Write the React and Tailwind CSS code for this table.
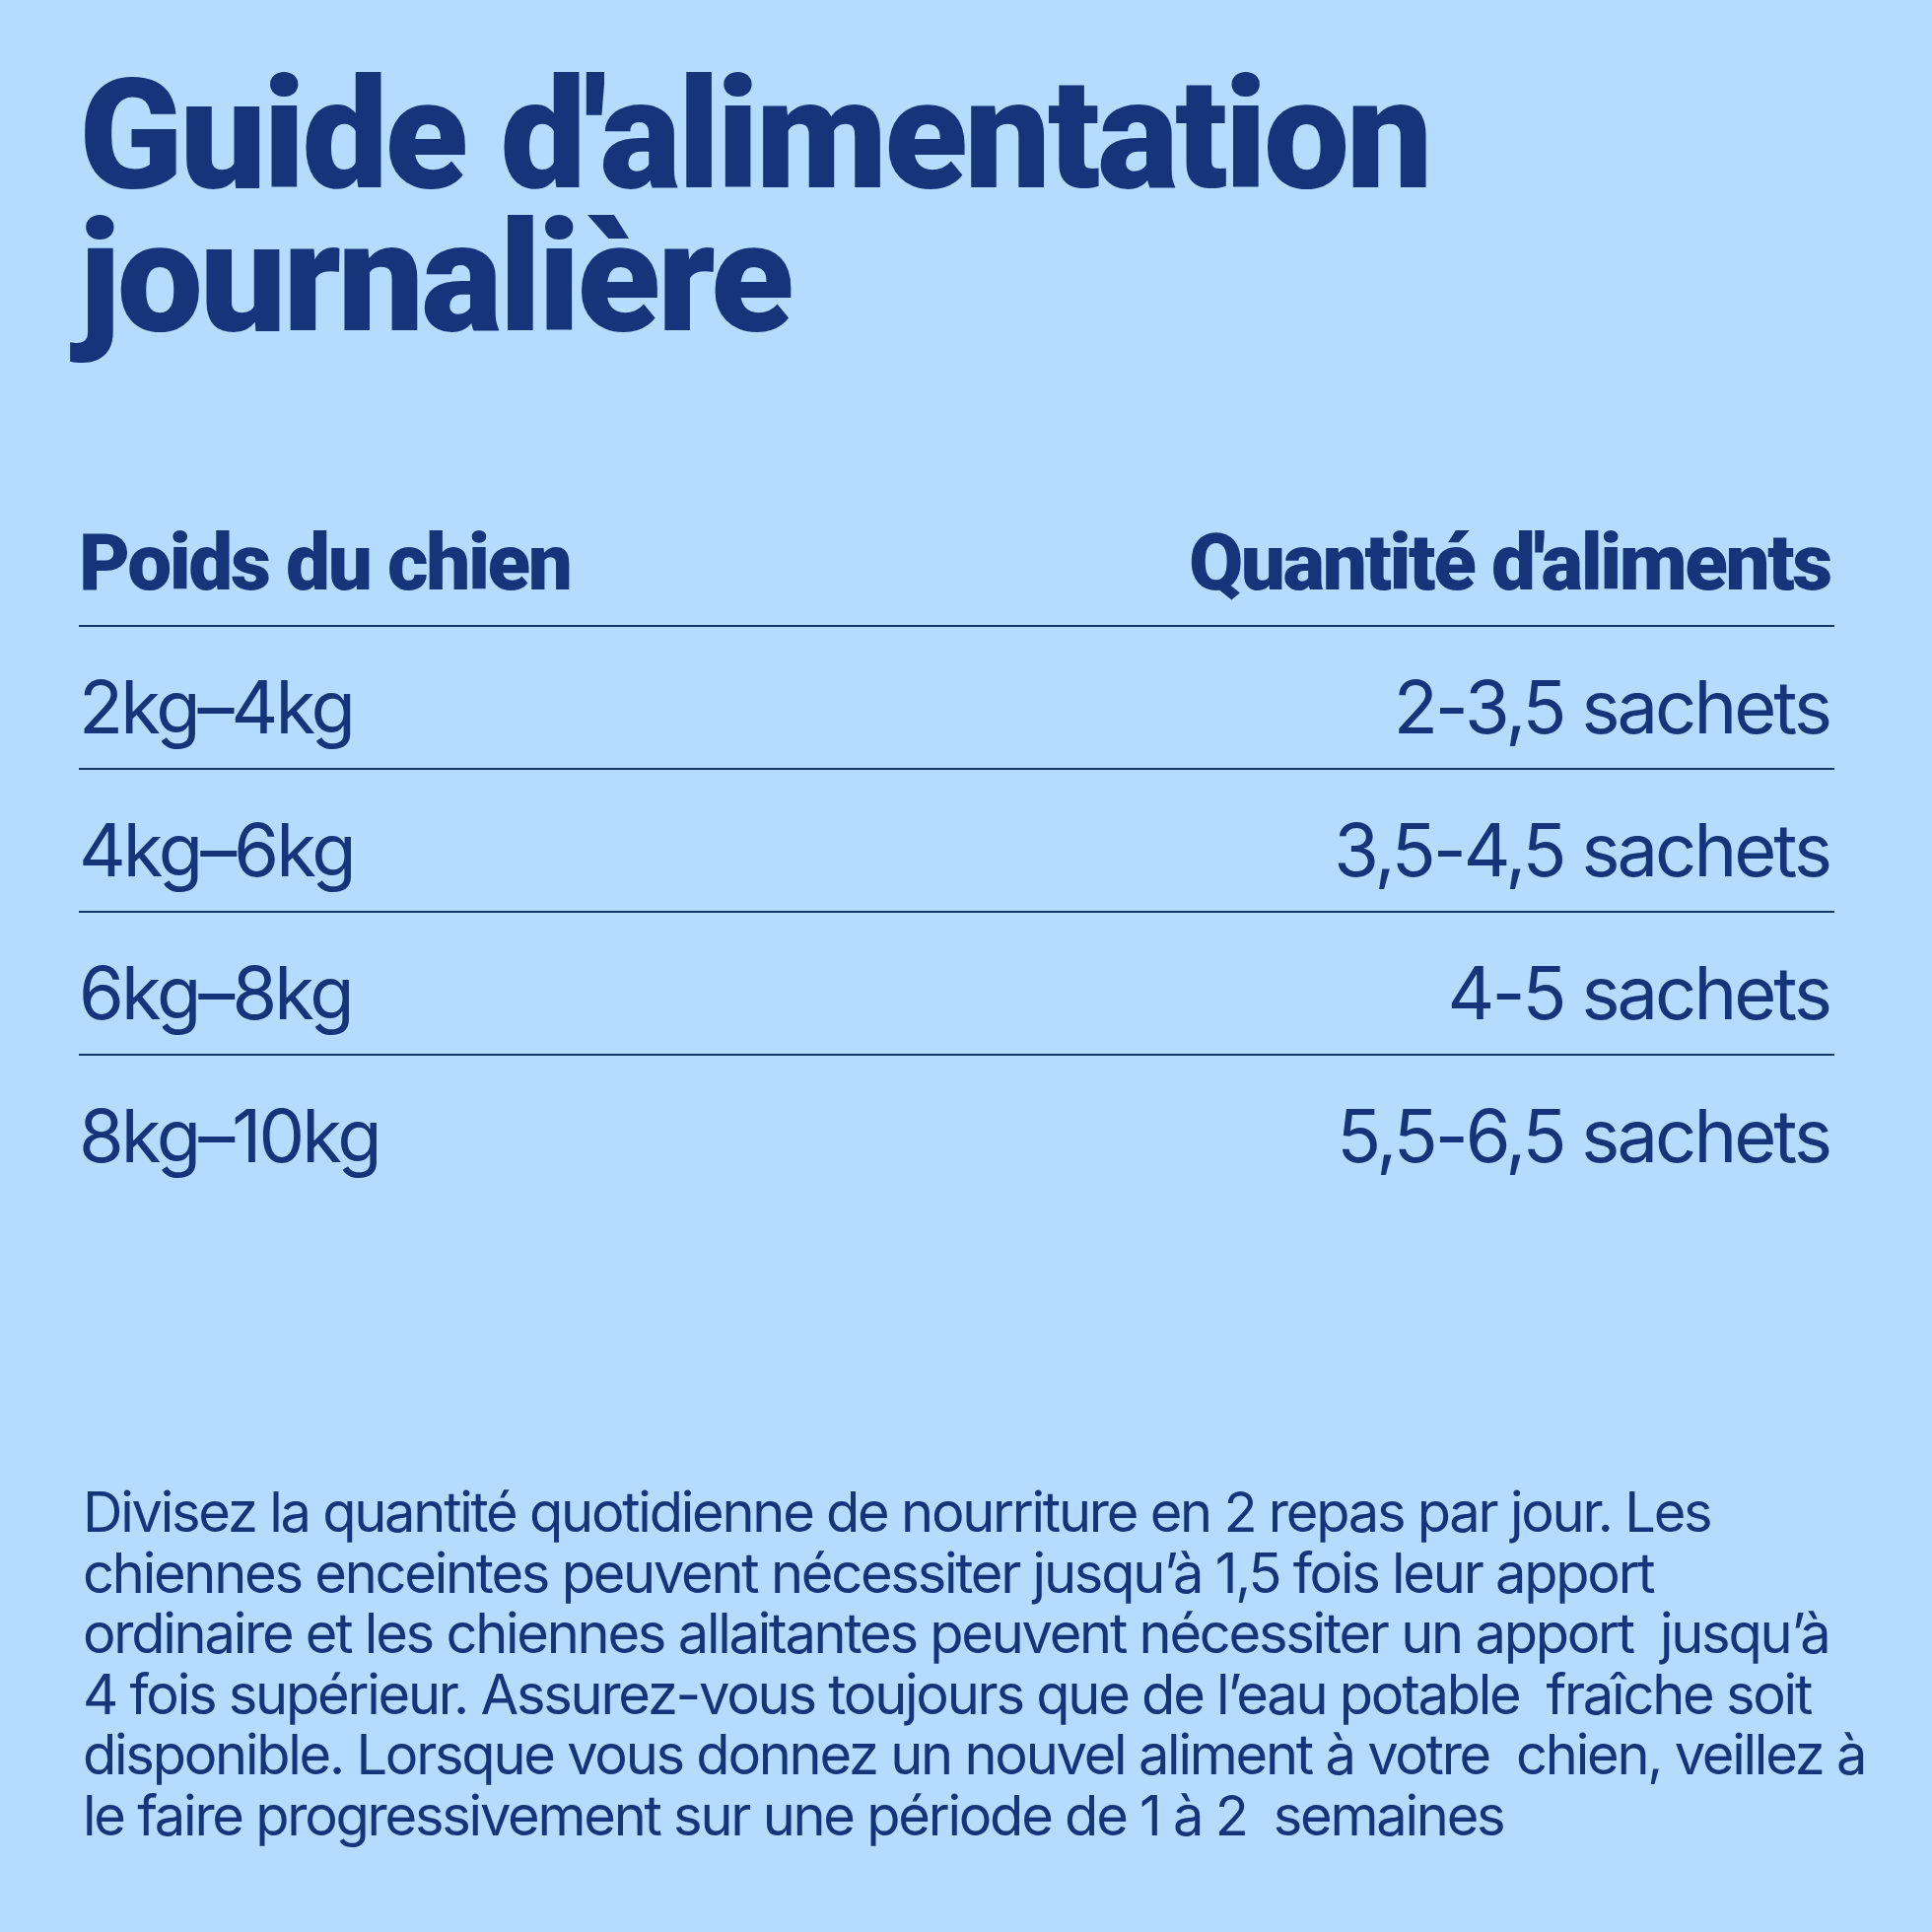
const rows = [
  { poids: '2kg–4kg', qte: '2-3,5 sachets' },
  { poids: '4kg–6kg', qte: '3,5-4,5 sachets' },
  { poids: '6kg–8kg', qte: '4-5 sachets' },
  { poids: '8kg–10kg', qte: '5,5-6,5 sachets' },
];

const note = [
  'Divisez la quantité quotidienne de nourriture en 2 repas par jour. Les',
  'chiennes enceintes peuvent nécessiter jusqu’à 1,5 fois leur apport',
  'ordinaire et les chiennes allaitantes peuvent nécessiter un apport  jusqu’à',
  '4 fois supérieur. Assurez-vous toujours que de l’eau potable  fraîche soit',
  'disponible. Lorsque vous donnez un nouvel aliment à votre  chien, veillez à',
  'le faire progressivement sur une période de 1 à 2  semaines',
];

export default function App() {
  return (
    <div className="w-[1960px] h-[1960px] overflow-hidden bg-[#b5dbfe] text-[#15347a] pl-[80px] pr-[99px] pt-[65px]">
      {/* Title */}
      <h1 className="font-['Roboto',sans-serif] font-black text-[155px] leading-[145px] tracking-[-0.02em]">
        Guide d'alimentation
        <br />
        journalière
      </h1>

      {/* Table */}
      <div className="mt-[176px]">
        <div className="flex justify-between border-b-2 border-[#133869] pb-[23px] pr-[4px] font-['Roboto',sans-serif] font-black text-[80px] leading-[80px] tracking-[-0.03em]">
          <span>Poids du chien</span>
          <span>Quantité d'aliments</span>
        </div>
        {rows.map((r, i) => (
          <div
            key={r.poids}
            className={`flex justify-between h-[145px] pt-[44px] pr-[5px] font-['Inter',sans-serif] text-[74px] leading-[74px] tracking-[-0.04em] ${
              i < rows.length - 1 ? 'border-b-2 border-[#133869]' : ''
            }`}
          >
            <span>{r.poids}</span>
            <span>{r.qte}</span>
          </div>
        ))}
      </div>

      {/* Note */}
      <div className="mt-[288px] pl-[4px] font-['Inter',sans-serif] text-[56px] leading-[61.6px] tracking-[-0.04em]">
        {note.map((line) => (
          <div key={line} className="whitespace-pre">{line}</div>
        ))}
      </div>
    </div>
  );
}
